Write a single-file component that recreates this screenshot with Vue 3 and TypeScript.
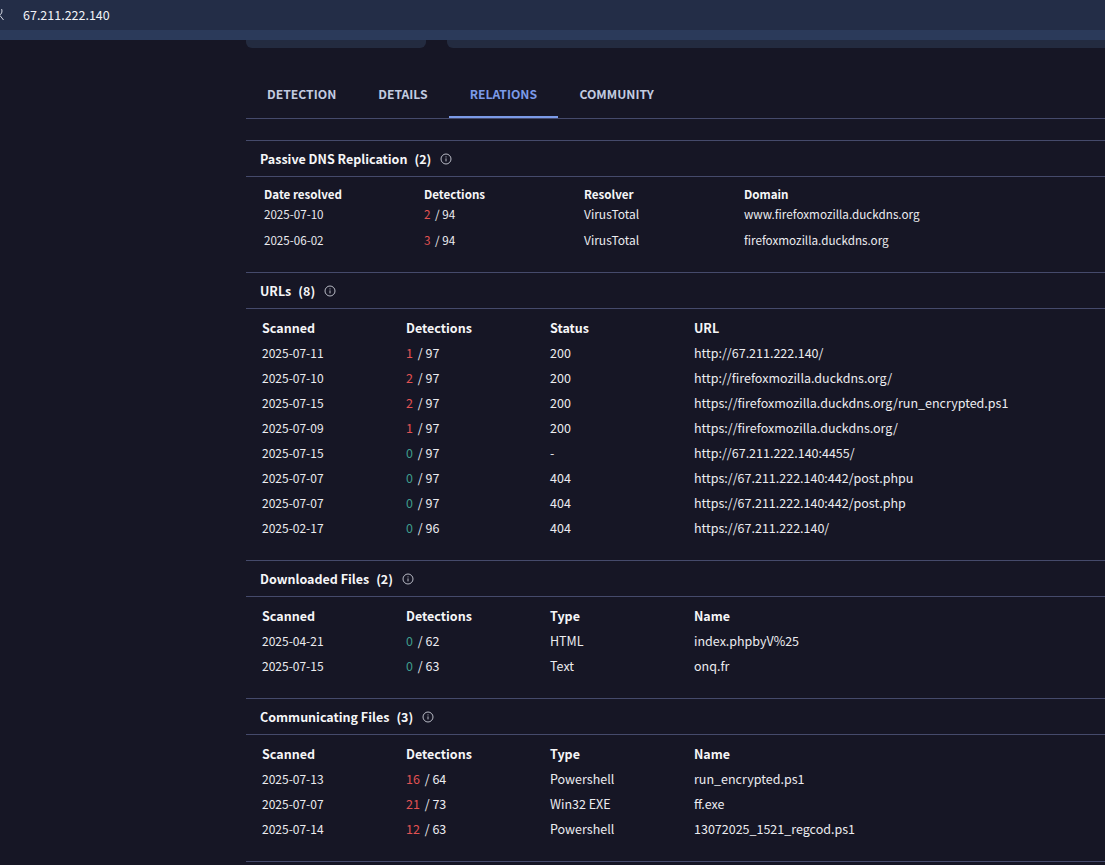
<script setup lang="ts">
interface Section {
  title: string
  count: number
  compact?: boolean
  headers: string[]
  rows: { date: string; hits: string; total: string; third: string; fourth: string }[]
}
const mk = (date: string, hits: string, total: string, third: string, fourth: string) => ({ date, hits, total, third, fourth })
const tabs = ['DETECTION', 'DETAILS', 'RELATIONS', 'COMMUNITY']
const sections: Section[] = [
  {
    title: 'Passive DNS Replication', count: 2, compact: true,
    headers: ['Date resolved', 'Detections', 'Resolver', 'Domain'],
    rows: [
      mk('2025-07-10', '2', '94', 'VirusTotal', 'www.firefoxmozilla.duckdns.org'),
      mk('2025-06-02', '3', '94', 'VirusTotal', 'firefoxmozilla.duckdns.org'),
    ],
  },
  {
    title: 'URLs', count: 8,
    headers: ['Scanned', 'Detections', 'Status', 'URL'],
    rows: [
      mk('2025-07-11', '1', '97', '200', 'http://67.211.222.140/'),
      mk('2025-07-10', '2', '97', '200', 'http://firefoxmozilla.duckdns.org/'),
      mk('2025-07-15', '2', '97', '200', 'https://firefoxmozilla.duckdns.org/run_encrypted.ps1'),
      mk('2025-07-09', '1', '97', '200', 'https://firefoxmozilla.duckdns.org/'),
      mk('2025-07-15', '0', '97', '-', 'http://67.211.222.140:4455/'),
      mk('2025-07-07', '0', '97', '404', 'https://67.211.222.140:442/post.phpu'),
      mk('2025-07-07', '0', '97', '404', 'https://67.211.222.140:442/post.php'),
      mk('2025-02-17', '0', '96', '404', 'https://67.211.222.140/'),
    ],
  },
  {
    title: 'Downloaded Files', count: 2,
    headers: ['Scanned', 'Detections', 'Type', 'Name'],
    rows: [
      mk('2025-04-21', '0', '62', 'HTML', 'index.phpbyV%25'),
      mk('2025-07-15', '0', '63', 'Text', 'onq.fr'),
    ],
  },
  {
    title: 'Communicating Files', count: 3,
    headers: ['Scanned', 'Detections', 'Type', 'Name'],
    rows: [
      mk('2025-07-13', '16', '64', 'Powershell', 'run_encrypted.ps1'),
      mk('2025-07-07', '21', '73', 'Win32 EXE', 'ff.exe'),
      mk('2025-07-14', '12', '63', 'Powershell', '13072025_1521_regcod.ps1'),
    ],
  },
]
</script>

<template>
  <div class="page">
    <header class="topbar">
      <svg class="search" width="12" height="12" viewBox="0 0 12 12" fill="none" stroke="#d5d9e4" stroke-width="1">
        <circle cx="-3" cy="2" r="5" />
        <path d="M0 6.5l3.5 4.5" />
      </svg>
      <span class="query">67.211.222.140</span>
    </header>
    <div class="subbar"></div>
    <main class="content">
      <div class="cards">
        <div class="card small"></div>
        <div class="card wide"></div>
      </div>
      <nav class="tabs">
        <span v-for="tab in tabs" :key="tab" class="tab" :class="{ active: tab === 'RELATIONS' }">{{ tab }}</span>
      </nav>
      <section v-for="s in sections" :key="s.title" class="section" :class="{ compact: s.compact }">
        <h2 class="title">
          <span>{{ s.title }}</span>
          <span class="count">({{ s.count }})</span>
          <svg width="12" height="12" viewBox="0 0 12 12" fill="none" stroke="#c9ccd6" stroke-width="0.9">
            <circle cx="6" cy="6" r="5" />
            <path d="M6 5.4v3M6 3.4v1" />
          </svg>
        </h2>
        <div class="table">
          <div class="row head">
            <span v-for="h in s.headers" :key="h">{{ h }}</span>
          </div>
          <div v-for="(r, i) in s.rows" :key="i" class="row">
            <span class="num">{{ r.date }}</span>
            <span><b :class="r.hits === '0' ? 'clean' : 'bad'">{{ r.hits }}</b> / {{ r.total }}</span>
            <span class="third">{{ r.third }}</span>
            <span>{{ r.fourth }}</span>
          </div>
        </div>
      </section>
    </main>
  </div>
</template>

<style>
html, body {
  background: #161625;
}
</style>

<style scoped>
.page {
  width: 1105px;
  height: 865px;
  overflow: hidden;
  background: #161625;
  color: #f0f0f4;
  font-family: "Noto Sans CJK JP", "Noto Sans", sans-serif;
  font-size: 12px;
}
.topbar {
  height: 30px;
  background: #232d47;
  display: flex;
  align-items: center;
  gap: 11px;
}
.search {
  flex: none;
}
.query {
  font-size: 12.5px;
  color: #f2f3f7;
  margin-top: -1px;
}
.subbar {
  height: 10px;
  background: #2b3a5a;
}
.content {
  margin-left: 246px;
}
.cards {
  display: flex;
  gap: 21px;
  height: 8px;
}
.card {
  background: #232b40;
  border-radius: 0 0 6px 6px;
}
.card.small {
  width: 180px;
}
.card.wide {
  flex: 1;
  border-bottom-right-radius: 0;
}
.tabs {
  height: 70px;
  margin-bottom: 21px;
  display: flex;
  border-bottom: 1px solid #454a6b;
}
.tab {
  box-sizing: border-box;
  height: 70px;
  padding: 36px 21px 0;
  font-size: 12.2px;
  line-height: 20px;
  font-weight: 700;
  color: #c3cbe0;
}
.tab.active {
  padding-right: 21.4px;
  color: #7b9ae8;
  border-bottom: 2px solid #7b9ae8;
}
.section {
  border-top: 1px solid #454a6b;
}
.section:last-child {
  border-bottom: 1px solid #454a6b;
}
.title {
  box-sizing: border-box;
  height: 36px;
  margin: 0;
  padding: 0 14px;
  display: flex;
  align-items: center;
  gap: 7px;
  font-size: 12.5px;
  font-weight: 700;
  color: #f6f6f8;
  border-bottom: 1px solid #454a6b;
}
.count {
  margin-right: 2px;
}
.table {
  padding: 6px 16px 20px;
}
.row {
  display: grid;
  grid-template-columns: repeat(3, 144px) 1fr;
  height: 25px;
  align-items: center;
  font-size: 12.5px;
  color: #ececf0;
}
.num {
  font-size: 12px;
}
.row.head {
  font-weight: 700;
  font-size: 12.5px;
  color: #f6f6f8;
}
.compact .table {
  padding: 10px 18px 19px;
}
.compact .row {
  grid-template-columns: repeat(3, 160px) 1fr;
  height: 26px;
  line-height: 26px;
  align-items: baseline;
  font-size: 11.7px;
}
.compact .third {
  font-size: 12px;
}
.compact .num {
  font-size: 11.6px;
}
.compact .row.head {
  height: 14px;
  line-height: 14px;
  font-size: 11.6px;
}
b {
  font-weight: 400;
  margin-right: 2px;
}
.bad {
  color: #e05252;
}
.clean {
  color: #3f9c8c;
}
</style>
